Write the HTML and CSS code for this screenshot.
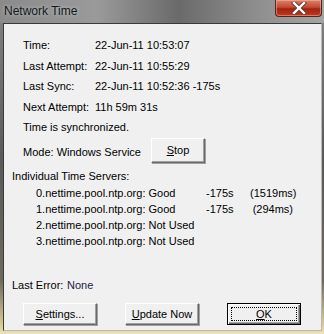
FILE: index.html
```html
<!DOCTYPE html>
<html lang="en">
<head>
  <meta charset="UTF-8" />
  <title>Network Time</title>
  <link rel="stylesheet" href="styles.css">
</head>
<body>
  <div class="window">
    <div class="title-bar">
      <span class="title">Network Time</span>
      <div class="close-btn">
        <svg width="16" height="12" viewBox="0 0 16 12">
          <path d="M3 1 L13 11 M13 1 L3 11" stroke="#5a3a30" stroke-width="4.2" stroke-linecap="square"/>
          <path d="M3 1 L13 11 M13 1 L3 11" stroke="#fff" stroke-width="2.4" stroke-linecap="square"/>
        </svg>
      </div>
    </div>

    <div class="client">
      <div class="info">
        <div class="row"><span class="label">Time:</span><span>22-Jun-11 10:53:07</span></div>
        <div class="row"><span class="label">Last Attempt:</span><span>22-Jun-11 10:55:29</span></div>
        <div class="row"><span class="label">Last Sync:</span><span>22-Jun-11 10:52:36 -175s</span></div>
        <div class="row"><span class="label">Next Attempt:</span><span>11h 59m 31s</span></div>
        <div class="row">Time is synchronized.</div>
      </div>

      <div class="mode-row">
        <span class="mode-text">Mode: Windows Service</span>
        <div class="btn stop-btn"><u>S</u>top</div>
      </div>

      <div class="servers-title">Individual Time Servers:</div>
      <div class="servers">
        <span>0.nettime.pool.ntp.org: Good</span><span>-175s</span><span class="ms">(1519ms)</span>
        <span>1.nettime.pool.ntp.org: Good</span><span>-175s</span><span class="ms">(294ms)</span>
        <span>2.nettime.pool.ntp.org: Not Used</span><span></span><span></span>
        <span>3.nettime.pool.ntp.org: Not Used</span><span></span><span></span>
      </div>

      <div class="last-error"><span class="err-label">Last Error:</span><span class="err-value">None</span></div>

      <div class="buttons">
        <div class="btn"><u>S</u>ettings...</div>
        <div class="btn"><u>U</u>pdate Now</div>
        <div class="btn default-btn"><div class="focus"><u>O</u>K</div></div>
      </div>
    </div>
  </div>
</body>
</html>
```

FILE: styles.css
```css
body {
  margin: 0;
  font-family: "Liberation Sans", Arial, sans-serif;
  font-size: 11px;
  color: #000;
}

.window {
  width: 324px;
  height: 334px;
  box-sizing: border-box;
  padding: 0 2px 3px 3px;
  display: flex;
  flex-direction: column;
  background: linear-gradient(to bottom, #8e8e8e 0, #7c7c7c 30px, #5a5a5a 160px, #6d6a5c 280px, #d9cc92 325px, #ece4b6 334px);
}

.title-bar {
  height: 23px;
  display: flex;
  justify-content: space-between;
  align-items: flex-start;
  background: linear-gradient(to right, #8a8a8a, #9a9a9a 30%, #6a6a6a 55%, #8f8f8f 80%, #a5a5a5);
  margin: 0 -2px 0 -3px;
  padding-left: 4px;
}

.title {
  font-size: 12px;
  color: #101820;
  margin-top: 4px;
  text-shadow: 0 0 4px rgba(255, 255, 255, 0.5);
}

.close-btn {
  width: 45px;
  height: 16px;
  margin-right: 2px;
  border: 1px solid #4a2a22;
  border-top: none;
  border-radius: 0 0 4px 4px;
  background: linear-gradient(to bottom, #d8816c 0, #c44a32 45%, #a5220e 55%, #c2391f 100%);
  box-shadow: inset 0 0 0 1px rgba(255, 200, 180, 0.45);
  display: flex;
  justify-content: center;
  align-items: center;
}

.client {
  flex: 1;
  background: #f0f0f0;
  border-top: 1px solid #3a3a3a;
  border-left: 1px solid #3a3a3a;
  border-right: 1px solid #b8b8b8;
  border-bottom: 1px solid #b8b8b8;
  padding: 11px 0 0 8px;
  display: flex;
  flex-direction: column;
}

.info {
  padding-left: 11px;
}

.row {
  height: 20.5px;
  line-height: 20px;
  display: flex;
}

.label {
  width: 72px;
}

.mode-row {
  height: 25px;
  display: flex;
  align-items: center;
  padding-left: 11px;
}

.mode-text {
  width: 128px;
  padding-top: 3px;
}

.btn {
  box-sizing: border-box;
  width: 74px;
  height: 22px;
  display: flex;
  justify-content: center;
  align-items: center;
  background: #f0f0f0;
  border-top: 1px solid #fff;
  border-left: 1px solid #fff;
  border-right: 1px solid #696969;
  border-bottom: 1px solid #696969;
  box-shadow: inset -1px -1px 0 #a0a0a0, 1px 1px 0 #a0a0a0;
}

.stop-btn {
  width: 54px;
  height: 25px;
}

.servers-title {
  margin-top: 5px;
  line-height: 16px;
  height: 17px;
}

.servers {
  display: grid;
  grid-template-columns: 170px 44px 43px;
  padding-left: 24px;
  line-height: 16px;
}

.ms {
  text-align: right;
}

.last-error {
  margin-top: 28px;
  line-height: 16px;
  display: flex;
}

.err-label {
  width: 55px;
}

.err-value {
  color: #1c1c48;
}

.buttons {
  display: flex;
  gap: 28px;
  margin-top: 10px;
  padding-left: 11px;
}

.default-btn {
  border: 1px solid #000;
  box-shadow: inset 1px 1px 0 #fff, inset -1px -1px 0 #696969, inset -2px -2px 0 #a0a0a0;
  padding: 3px;
}

.focus {
  width: 100%;
  height: 100%;
  box-sizing: border-box;
  border: 1px dotted #000;
  display: flex;
  justify-content: center;
  align-items: center;
}
```
